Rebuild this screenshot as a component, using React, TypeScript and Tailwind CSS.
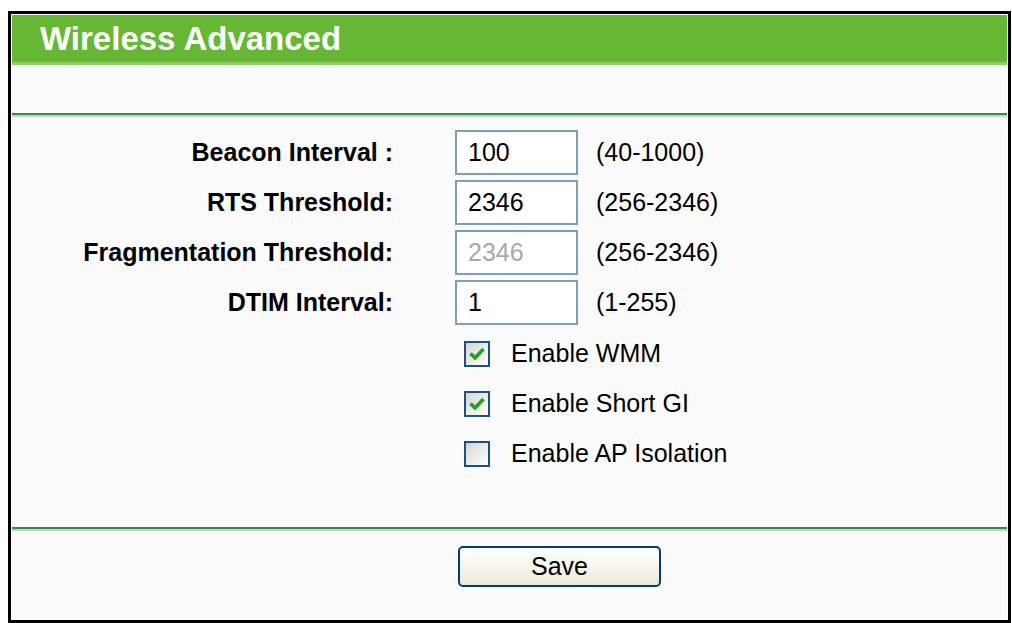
import React from 'react'

const rows = [
  { label: 'Beacon Interval :', value: '100', range: '(40-1000)', disabled: false },
  { label: 'RTS Threshold:', value: '2346', range: '(256-2346)', disabled: false },
  { label: 'Fragmentation Threshold:', value: '2346', range: '(256-2346)', disabled: true },
  { label: 'DTIM Interval:', value: '1', range: '(1-255)', disabled: false },
]

const checks = [
  { label: 'Enable WMM', checked: true },
  { label: 'Enable Short GI', checked: true },
  { label: 'Enable AP Isolation', checked: false },
]

function CheckBox({ checked }: { checked: boolean }) {
  return (
    <span className="w-[26px] h-[26px] border-2 border-[#1c5180] bg-gradient-to-br from-[#d6d6d0] to-white flex items-center justify-center">
      {checked && (
        <svg width="18" height="16" viewBox="0 0 18 16">
          <path d="M2.5 7.5 L7 12 L15.5 3" fill="none" stroke="#21a121" strokeWidth="3.6" />
        </svg>
      )}
    </span>
  )
}

function Divider() {
  return (
    <div className="flex flex-col">
      <div className="h-[2px] bg-[#3a8658]" />
      <div className="h-[2px] bg-[#b5dcc0]" />
    </div>
  )
}

export default function App() {
  return (
    <div className="w-[1012px] h-[623px] bg-white pt-[11px] pl-[8px] font-['Liberation_Sans',Arial,sans-serif]">
      <div className="w-[1003px] h-[612px] border-[3px] border-black bg-white p-[1px]">
        <div className="h-full bg-[#fafafa] flex flex-col">
          {/* Header */}
          <div className="h-[50px] bg-[#66b834] border-b-[3px] border-[#8ccf63] flex items-center pl-[28px]">
            <h1 className="text-[33px] font-bold text-white leading-none">Wireless Advanced</h1>
          </div>

          <div className="h-[48px]" />
          <Divider />

          {/* Fields */}
          <div className="flex flex-col gap-[5px] mt-[13px]">
            {rows.map((r) => (
              <div key={r.label} className="flex items-center h-[45px]">
                <div className="w-[381px] text-right text-[25px] font-bold text-black">{r.label}</div>
                <div
                  className={`ml-[62px] w-[123px] h-[45px] border-2 border-[#7f9db9] bg-white flex items-center pl-[11px] text-[25px] ${
                    r.disabled ? 'text-[#a8a8a8]' : 'text-black'
                  }`}
                >
                  {r.value}
                </div>
                <div className="ml-[18px] text-[25px] text-black">{r.range}</div>
              </div>
            ))}
          </div>

          {/* Checkboxes */}
          <div className="flex flex-col gap-[24px] mt-[16px] pl-[452px]">
            {checks.map((c) => (
              <div key={c.label} className="flex items-center h-[26px]">
                <CheckBox checked={c.checked} />
                <span className="ml-[21px] text-[25px] text-black">{c.label}</span>
              </div>
            ))}
          </div>

          <div className="h-[60px]" />
          <Divider />

          {/* Save */}
          <div className="pl-[446px] mt-[15px]">
            <button className="w-[203px] h-[41px] rounded-[5px] border-2 border-[#003c74] bg-gradient-to-b from-white to-[#ece9d8] text-[25px] text-black leading-none">
              Save
            </button>
          </div>
        </div>
      </div>
    </div>
  )
}
